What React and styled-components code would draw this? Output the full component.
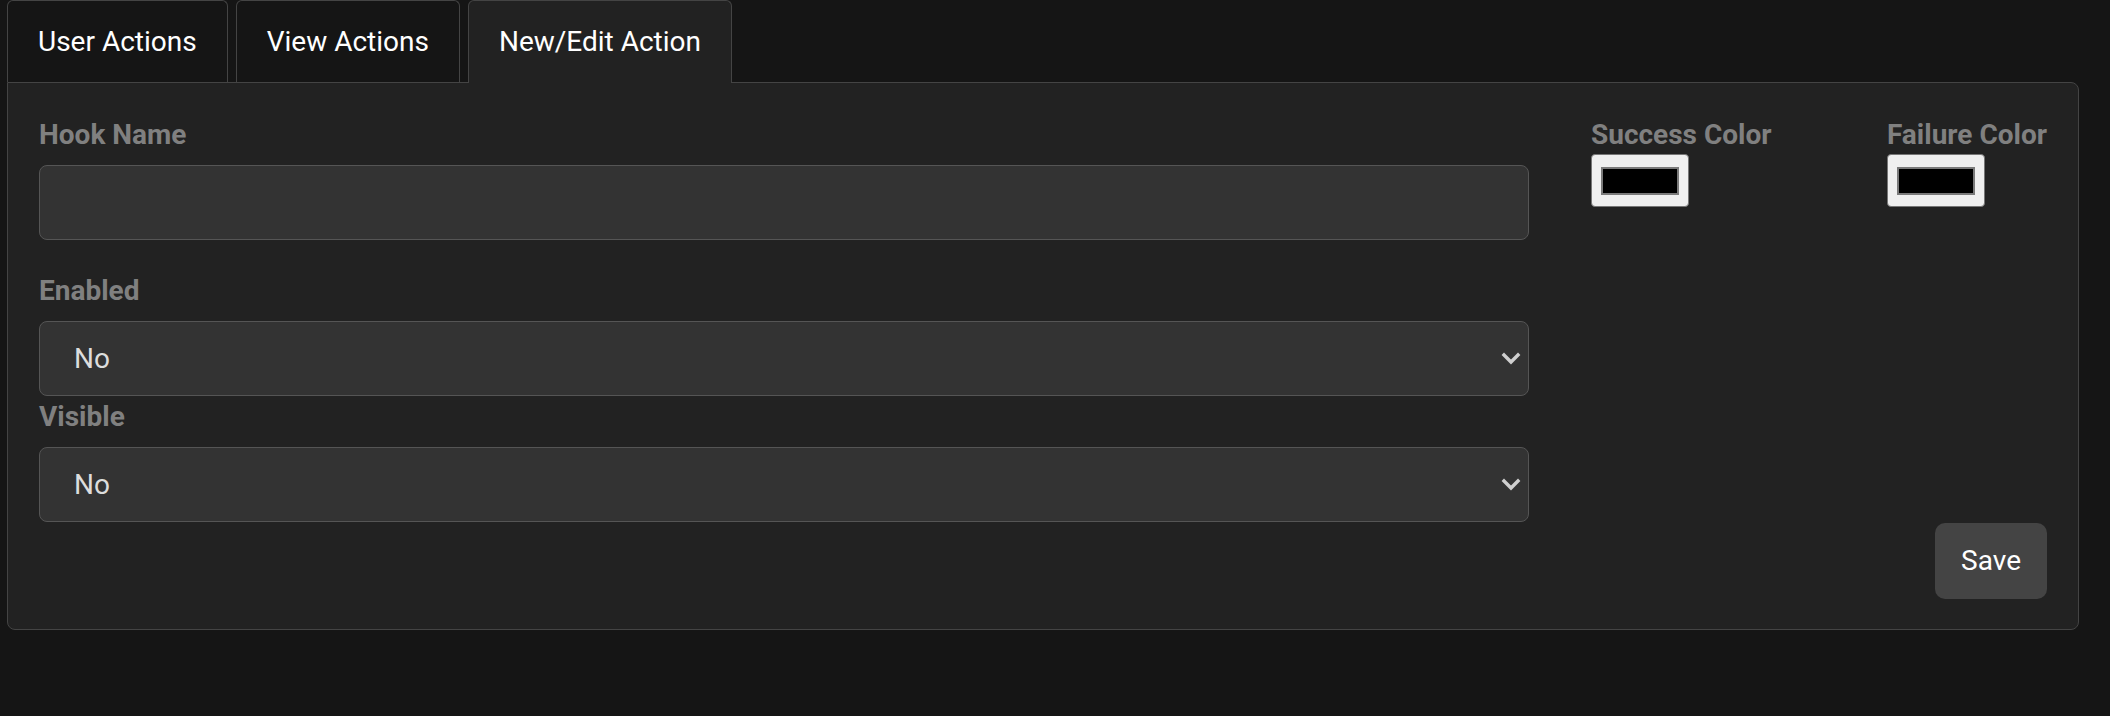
import React from "react";
import styled, { createGlobalStyle } from "styled-components";

const Global = createGlobalStyle`
  html, body { margin: 0; padding: 0; background: #151515; }
  body { font-family: Roboto, "Liberation Sans", sans-serif; color: #fff; min-height: 100vh; }
  * { box-sizing: border-box; }
`;

const Page = styled.div`
  padding: 0 31px 0 7px;
`;

const TabList = styled.div`
  display: flex;
  gap: 8px;
  align-items: flex-end;
`;

const Tab = styled.button`
  position: relative;
  z-index: 1;
  height: ${(p) => (p.$active ? "83px" : "82px")};
  margin-bottom: ${(p) => (p.$active ? "-1px" : "0")};
  padding: 0 30px;
  display: flex;
  align-items: center;
  font-family: inherit;
  font-size: 28px;
  line-height: 32px;
  font-weight: 400;
  color: #fff;
  background: ${(p) => (p.$active ? "#222222" : "#151515")};
  border: 1px solid #444;
  border-bottom: none;
  border-radius: 6px 6px 0 0;
  cursor: pointer;
`;

const Panel = styled.div`
  background: #222222;
  border: 1px solid #444;
  border-radius: 0 8px 8px 8px;
  padding: 36px 31px 30px 31px;
`;

const Grid = styled.div`
  display: grid;
  grid-template-columns: 1fr 456px;
  column-gap: 62px;
`;

const Column = styled.div`
  display: flex;
  flex-direction: column;
`;

const Field = styled.div`
  display: flex;
  flex-direction: column;
  margin-bottom: ${(p) => p.$gap || 0}px;
`;

const Label = styled.label`
  font-size: 28px;
  line-height: 32px;
  font-weight: 700;
  color: #808080;
  margin-bottom: ${(p) => (p.$tight ? 3 : 14)}px;
`;

const TextInput = styled.input`
  height: 75px;
  width: 100%;
  background: #333333;
  border: 1px solid #555;
  border-radius: 8px;
  color: #ddd;
  font-family: inherit;
  font-size: 28px;
  padding: 0 34px;
  outline: none;
`;

const SelectWrap = styled.div`
  position: relative;
`;

const Select = styled.select`
  appearance: none;
  -webkit-appearance: none;
  height: 75px;
  width: 100%;
  background: #333333;
  border: 1px solid #555;
  border-radius: 8px;
  color: #ddd;
  font-family: inherit;
  font-size: 28px;
  padding: 0 34px;
  outline: none;
`;

const Chevron = styled.svg`
  position: absolute;
  right: 8px;
  top: 50%;
  transform: translateY(-50%);
  pointer-events: none;
`;

const ColorRow = styled.div`
  display: flex;
  justify-content: space-between;
`;

const Swatch = styled.div`
  width: 98px;
  height: 53px;
  background: #efefef;
  border: 1px solid #767676;
  border-radius: 4px;
  padding: 12px 9px 11px 9px;
`;

const SwatchInner = styled.div`
  width: 100%;
  height: 100%;
  background: ${(p) => p.$color};
  border: 2px solid #7a7a7a;
`;

const Footer = styled.div`
  display: flex;
  justify-content: flex-end;
  margin-top: 1px;
`;

const SaveButton = styled.button`
  height: 76px;
  padding: 0 26px;
  background: #444444;
  border: none;
  border-radius: 10px;
  color: #fff;
  font-family: inherit;
  font-size: 28px;
  line-height: 32px;
  cursor: pointer;
`;

const ChevronIcon = () => (
  <Chevron width="20" height="14" viewBox="0 0 20 14">
    <path d="M3 3 L10 10 L17 3" fill="none" stroke="#cfcfcf" strokeWidth="3.4" strokeLinecap="square" />
  </Chevron>
);

const SelectField = ({ label, gap }) => (
  <Field $gap={gap}>
    <Label>{label}</Label>
    <SelectWrap>
      <Select defaultValue="no">
        <option value="no">No</option>
        <option value="yes">Yes</option>
      </Select>
      <ChevronIcon />
    </SelectWrap>
  </Field>
);

const ColorField = ({ label, color }) => (
  <Field>
    <Label $tight>{label}</Label>
    <Swatch>
      <SwatchInner $color={color} />
    </Swatch>
  </Field>
);

export default function App() {
  return (
    <>
      <Global />
      <Page>
        <TabList>
          <Tab>User Actions</Tab>
          <Tab>View Actions</Tab>
          <Tab $active>New/Edit Action</Tab>
        </TabList>
        <Panel>
          <Grid>
            <Column>
              <Field $gap={35}>
                <Label>Hook Name</Label>
                <TextInput type="text" />
              </Field>
              <SelectField label="Enabled" gap={5} />
              <SelectField label="Visible" />
            </Column>
            <Column>
              <ColorRow>
                <ColorField label="Success Color" color="#000" />
                <ColorField label="Failure Color" color="#000" />
              </ColorRow>
            </Column>
          </Grid>
          <Footer>
            <SaveButton>Save</SaveButton>
          </Footer>
        </Panel>
      </Page>
    </>
  );
}
